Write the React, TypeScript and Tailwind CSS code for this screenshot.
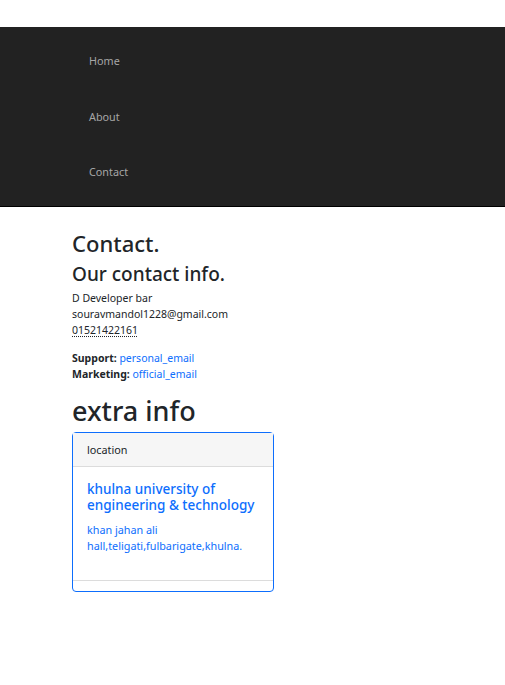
export default function App() {
  const links = ["Home", "About", "Contact"];

  return (
    <div className="min-h-screen bg-white font-['Noto_Sans',sans-serif] text-[#212529]">
      <div className="h-[27px]" />
      {/* Navbar, collapsed into a column */}
      <nav className="border-b border-black bg-[#222222]">
        <ul className="flex flex-col gap-[39.5px] px-[89px] pt-[20px] pb-[32px]">
          {links.map((l) => (
            <li key={l} className="h-[16px]">
              <a href="#" className="text-[10.8px] leading-[16px] text-[#a6a6a6]">
                {l}
              </a>
            </li>
          ))}
        </ul>
      </nav>

      <main className="px-[72px] pt-[23px]">
        <h1 className="text-[22px] font-medium leading-[26px]">Contact.</h1>
        <h2 className="mt-[6px] text-[19px] font-medium leading-[24px]">Our contact info.</h2>

        <address className="mt-[4px] text-[10.5px] not-italic leading-[16px]">
          D Developer bar
          <br />
          souravmandol1228@gmail.com
          <br />
          <abbr title="phone" className="underline decoration-dotted underline-offset-2">
            01521422161
          </abbr>
        </address>

        <address className="mt-[12px] text-[10.5px] not-italic leading-[16px]">
          <strong className="font-bold">Support:</strong>{" "}
          <a href="#" className="text-[#0d6efd]">personal_email</a>
          <br />
          <strong className="font-bold">Marketing:</strong>{" "}
          <a href="#" className="text-[#0d6efd]">official_email</a>
        </address>

        <h1 className="mt-[13px] text-[27px] font-medium leading-[32px]">extra info</h1>

        <div className="mt-[5px] w-[202px] rounded-[4px] border border-[#0d6efd]">
          <div className="h-[34px] border-b border-[#dcdcdc] bg-[#f6f6f6] px-[14px] text-[10.8px] leading-[33px]">
            location
          </div>
          <div className="px-[14px] pt-[14px] pb-[26px] text-[#0d6efd]">
            <h5 className="text-[13.5px] font-medium leading-[16px]">
              khulna university of engineering &amp; technology
            </h5>
            <p className="mt-[9px] text-[10.8px] leading-[16px]">
              khan jahan ali hall,teligati,fulbarigate,khulna.
            </p>
          </div>
          <div className="h-[11px] border-t border-[#dcdcdc]" />
        </div>
      </main>
    </div>
  );
}
